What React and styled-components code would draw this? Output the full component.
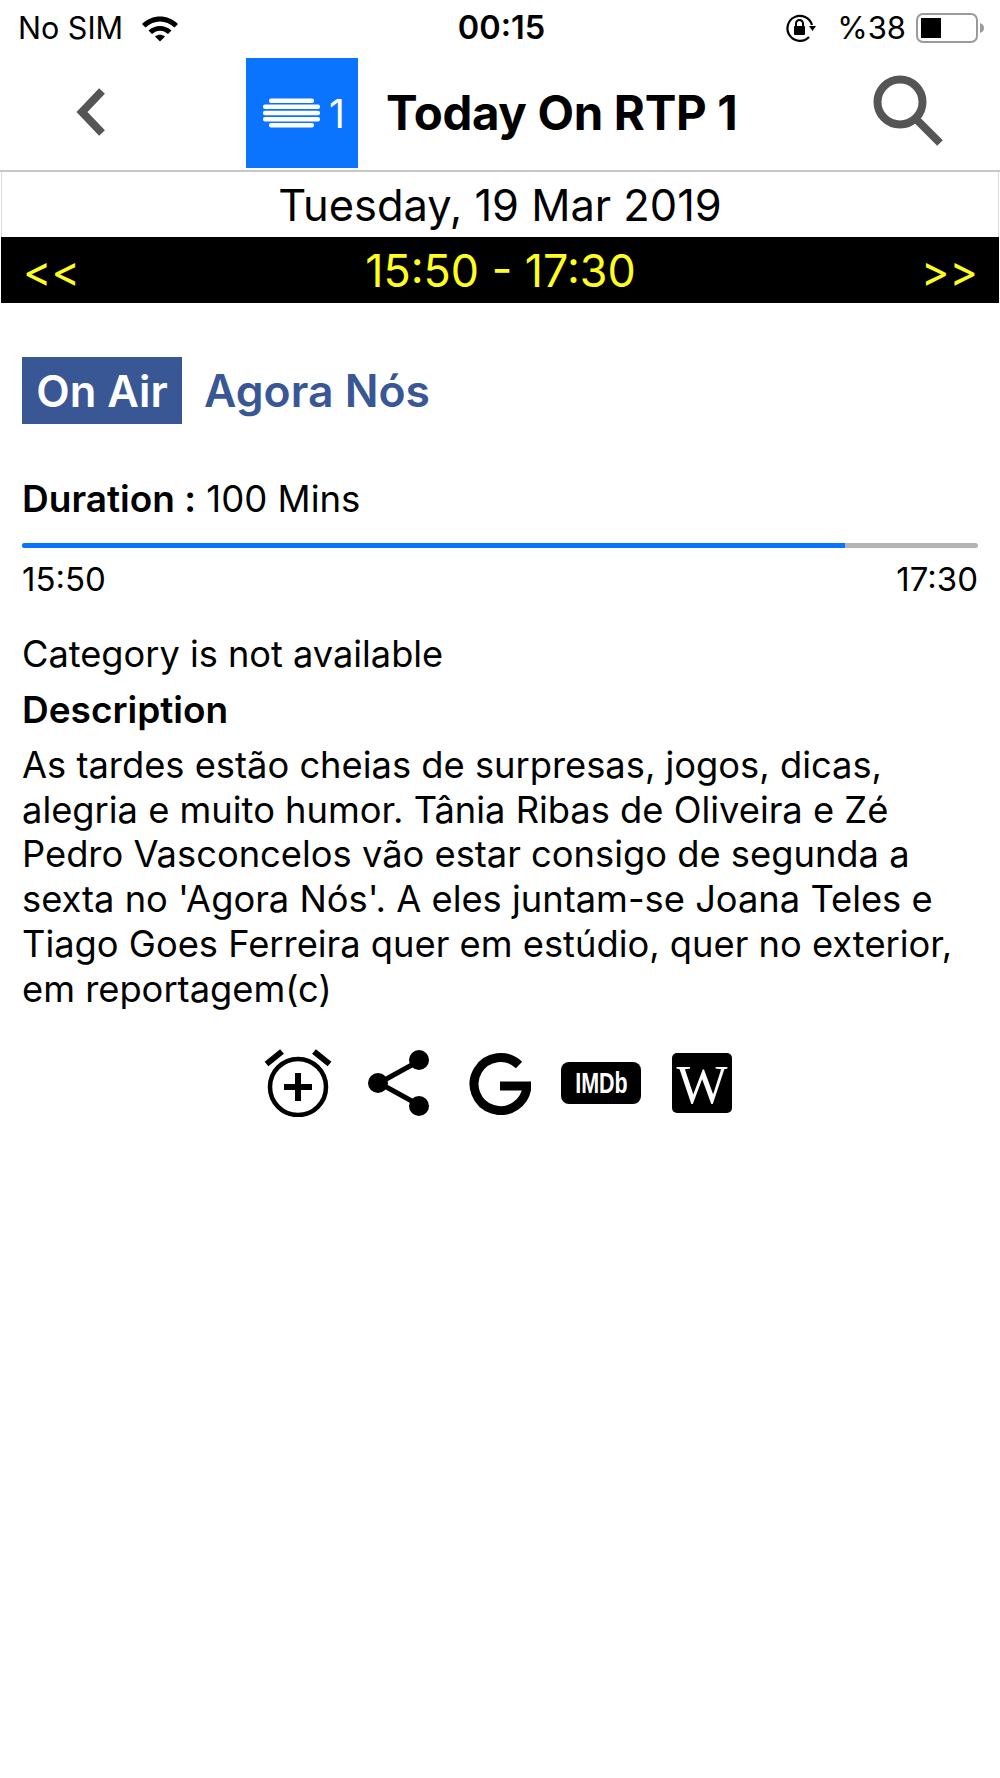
import React from 'react'
import styled, { createGlobalStyle } from 'styled-components'

const Global = createGlobalStyle`
  html, body { margin: 0; padding: 0; background: #fff; }
  body { font-family: Inter, "Liberation Sans", sans-serif; color: #000; }
`

const Page = styled.div`
  width: 1000px;
  height: 1778px;
  overflow: hidden;
  background: #fff;
`

const StatusBar = styled.div`
  height: 58px;
  box-sizing: border-box;
  padding: 0 15px 3px 18px;
  display: grid;
  grid-template-columns: 1fr auto 1fr;
  align-items: center;
  font-size: 30.5px;
`

const StatusLeft = styled.div`
  display: flex;
  align-items: center;
  gap: 18px;
`

const StatusRight = styled.div`
  display: flex;
  align-items: center;
  justify-content: flex-end;
`

const Clock = styled.div`
  font-weight: 600;
  font-size: 32.5px;
`

const Percent = styled.span`
  margin: 0 9px 0 20px;
  font-size: 31px;
`

const Header = styled.div`
  height: 114px;
  display: flex;
  align-items: flex-start;
  padding-left: 246px;
  position: relative;
  border-bottom: 2px solid #c8c8c8;
  box-sizing: border-box;
`

const IconSlot = styled.div`
  position: absolute;
  top: ${({ $top }) => $top}px;
  left: ${({ $left }) => $left}px;
  display: flex;
`

const Logo = styled.div`
  width: 112px;
  height: 110px;
  box-sizing: border-box;
  padding-left: 4px;
  background: #0a74ff;
  display: flex;
  align-items: center;
  justify-content: center;
  gap: 9px;
  color: #fff;
  font-size: 39px;
`

const Title = styled.h1`
  margin: 0 0 0 28px;
  font-size: 47.4px;
  line-height: 110px;
  font-weight: 700;
  letter-spacing: -0.3px;
`

const DateRow = styled.div`
  height: 65px;
  margin: 0 1px;
  display: flex;
  align-items: center;
  justify-content: center;
  font-size: 43.4px;
  box-sizing: border-box;
  border-left: 1px solid #ddd;
  border-right: 1px solid #ddd;
`

const TimeBar = styled.div`
  height: 66px;
  box-sizing: border-box;
  margin: 0 1px;
  background: #000;
  color: #ffff1e;
  display: flex;
  align-items: center;
  justify-content: space-between;
  padding: 2px 21px 0 22px;
  font-size: 44.8px;
`

const PageArrow = styled.span`
  font-size: 43px;
`

const Content = styled.div`
  padding: 54px 22px 0;
`

const TitleRow = styled.div`
  display: flex;
  align-items: center;
  gap: 22px;
  height: 67px;
`

const Badge = styled.div`
  width: 160px;
  height: 67px;
  background: #3a5795;
  color: #fff;
  font-size: 43.5px;
  font-weight: 600;
  display: flex;
  align-items: center;
  justify-content: center;
`

const ProgramName = styled.div`
  color: #3a5795;
  font-size: 44.5px;
  font-weight: 600;
`

const Duration = styled.div`
  margin-top: 52px;
  font-size: 36.6px;
  line-height: 46px;
`

const Strong = styled.span`
  font-weight: 600;
  font-size: 37px;
`

const Track = styled.div`
  margin-top: 21px;
  height: 5px;
  border-radius: 3px;
  background: #b4b4b4;
  overflow: hidden;
`

const Fill = styled.div`
  height: 100%;
  background: #0a74ff;
`

const Times = styled.div`
  display: flex;
  justify-content: space-between;
  margin-top: 12px;
  font-size: 33px;
  line-height: 38px;
`

const Category = styled.div`
  margin-top: 33px;
  font-size: 36.2px;
  line-height: 46px;
`

const SectionTitle = styled.div`
  margin-top: 10px;
  font-size: 37px;
  line-height: 46px;
  font-weight: 600;
`

const Description = styled.p`
  margin: 10px 0 0;
  font-size: 36.3px;
  line-height: 44.7px;
`

const Actions = styled.div`
  display: flex;
  justify-content: center;
  align-items: center;
  margin-top: 38px;
`

const ActionSlot = styled.div`
  width: 101px;
  height: 68px;
  display: flex;
  align-items: center;
  justify-content: center;
`

const ImdbBadge = styled.div`
  width: 80px;
  height: 42px;
  border-radius: 8px;
  background: #000;
  color: #fff;
  display: flex;
  align-items: center;
  justify-content: center;
  font-family: "Liberation Sans", sans-serif;
  font-size: 29px;
  font-weight: 700;
`

const ImdbText = styled.span`
  display: inline-block;
  transform: scaleX(0.74);
`

const WikiBadge = styled.div`
  width: 60px;
  height: 60px;
  border-radius: 5px;
  background: #000;
  color: #fff;
  display: flex;
  align-items: center;
  justify-content: center;
  padding-top: 4px;
  box-sizing: border-box;
  font-family: "Liberation Serif", serif;
  font-size: 54px;
  line-height: 1;
`

const Wifi = () => (
  <svg width="38" height="28" viewBox="0 0 38 28">
    <path d="M1 10 C11 0 27 0 37 10 L33.5 13.5 C25 5.5 13 5.5 4.5 13.5 Z" fill="#000" />
    <path d="M7.5 16.5 C14 10.5 24 10.5 30.5 16.5 L27 20 C22 15.5 16 15.5 11 20 Z" fill="#000" />
    <path d="M14 22.5 C17 20 21 20 24 22.5 L19 27.5 Z" fill="#000" />
  </svg>
)

const RotationLock = () => (
  <svg width="32" height="30" viewBox="0 0 32 30">
    <path d="M27 12 A12.5 12.5 0 1 0 24 24" fill="none" stroke="#000" strokeWidth="2.2" />
    <path d="M24 13 L31 13 L27.5 18 Z" fill="#000" />
    <rect x="9" y="13" width="11" height="9" rx="1" fill="#000" />
    <path d="M11 13 V10.5 A3.5 3.5 0 0 1 18 10.5 V13" fill="none" stroke="#000" strokeWidth="2" />
  </svg>
)

const Battery = () => (
  <svg width="70" height="32" viewBox="0 0 70 32">
    <rect x="2" y="2" width="60" height="28" rx="6" fill="none" stroke="#9a9a9a" strokeWidth="2" />
    <rect x="6" y="6" width="20" height="20" fill="#000" />
    <path d="M65 11 C68 12 69 14 69 16 C69 18 68 20 65 21 Z" fill="#9a9a9a" />
  </svg>
)

const BackChevron = () => (
  <svg width="32" height="50" viewBox="0 0 32 50">
    <path d="M27 4 L7 25 L27 46" fill="none" stroke="#555" strokeWidth="8" />
  </svg>
)

const SearchGlass = () => (
  <svg width="72" height="72" viewBox="0 0 72 72">
    <circle cx="27" cy="27" r="22.5" fill="none" stroke="#555" strokeWidth="8" />
    <path d="M43 44 L67 68" fill="none" stroke="#555" strokeWidth="8" />
  </svg>
)

const StripesLogo = () => (
  <svg width="57" height="30" viewBox="0 0 57 30" fill="#fff">
    <rect x="6" y="0.5" width="45" height="4.4" rx="2" />
    <rect x="0" y="6.6" width="57" height="4.4" rx="2" />
    <rect x="0" y="12.8" width="57" height="4.4" rx="2" />
    <rect x="0" y="19" width="57" height="4.4" rx="2" />
    <rect x="6" y="25.1" width="45" height="4.4" rx="2" />
  </svg>
)

const AlarmPlus = () => (
  <svg width="68" height="68" viewBox="0 0 68 68">
    <circle cx="34" cy="38" r="28" fill="none" stroke="#000" strokeWidth="4.5" />
    <path d="M20 38 H48 M34 24 V52" stroke="#000" strokeWidth="6" />
    <path d="M2.5 15 L18 2.5 M65.5 15 L50 2.5" stroke="#000" strokeWidth="6" />
  </svg>
)

const ShareNodes = () => (
  <svg width="64" height="68" viewBox="0 0 64 68">
    <path d="M52 12 L12 34 L52 56" fill="none" stroke="#000" strokeWidth="5" />
    <circle cx="52" cy="11" r="10" fill="#000" />
    <circle cx="11" cy="34" r="10" fill="#000" />
    <circle cx="52" cy="57" r="10" fill="#000" />
  </svg>
)

const GoogleG = () => (
  <svg width="62" height="64" viewBox="0 0 62 64">
    <path
      d="M50 14 A26.5 26.5 0 1 0 58 35 L31 35"
      fill="none"
      stroke="#000"
      strokeWidth="9"
    />
  </svg>
)

export default function App() {
  return (
    <Page>
      <Global />
      <StatusBar>
        <StatusLeft>
          <span>No SIM</span>
          <Wifi />
        </StatusLeft>
        <Clock>00:15</Clock>
        <StatusRight>
          <RotationLock />
          <Percent>%38</Percent>
          <Battery />
        </StatusRight>
      </StatusBar>
      <Header>
        <IconSlot $left={75} $top={29}>
          <BackChevron />
        </IconSlot>
        <Logo>
          <StripesLogo />
          <span>1</span>
        </Logo>
        <Title>Today On RTP 1</Title>
        <IconSlot $left={873} $top={17}>
          <SearchGlass />
        </IconSlot>
      </Header>
      <DateRow>Tuesday, 19 Mar 2019</DateRow>
      <TimeBar>
        <PageArrow>&lt;&lt;</PageArrow>
        <span>15:50 - 17:30</span>
        <PageArrow>&gt;&gt;</PageArrow>
      </TimeBar>
      <Content>
        <TitleRow>
          <Badge>On Air</Badge>
          <ProgramName>Agora Nós</ProgramName>
        </TitleRow>
        <Duration>
          <Strong>Duration :</Strong> 100 Mins
        </Duration>
        <Track>
          <Fill style={{ width: `${(823 / 956) * 100}%` }} />
        </Track>
        <Times>
          <span>15:50</span>
          <span>17:30</span>
        </Times>
        <Category>Category is not available</Category>
        <SectionTitle>Description</SectionTitle>
        <Description>
          As tardes estão cheias de surpresas, jogos, dicas,
          <br />
          alegria e muito humor. Tânia Ribas de Oliveira e Zé
          <br />
          Pedro Vasconcelos vão estar consigo de segunda a
          <br />
          sexta no 'Agora Nós'. A eles juntam-se Joana Teles e
          <br />
          Tiago Goes Ferreira quer em estúdio, quer no exterior,
          <br />
          em reportagem(c)
        </Description>
        <Actions>
          <ActionSlot><AlarmPlus /></ActionSlot>
          <ActionSlot><ShareNodes /></ActionSlot>
          <ActionSlot><GoogleG /></ActionSlot>
          <ActionSlot><ImdbBadge><ImdbText>IMDb</ImdbText></ImdbBadge></ActionSlot>
          <ActionSlot><WikiBadge>W</WikiBadge></ActionSlot>
        </Actions>
      </Content>
    </Page>
  )
}
